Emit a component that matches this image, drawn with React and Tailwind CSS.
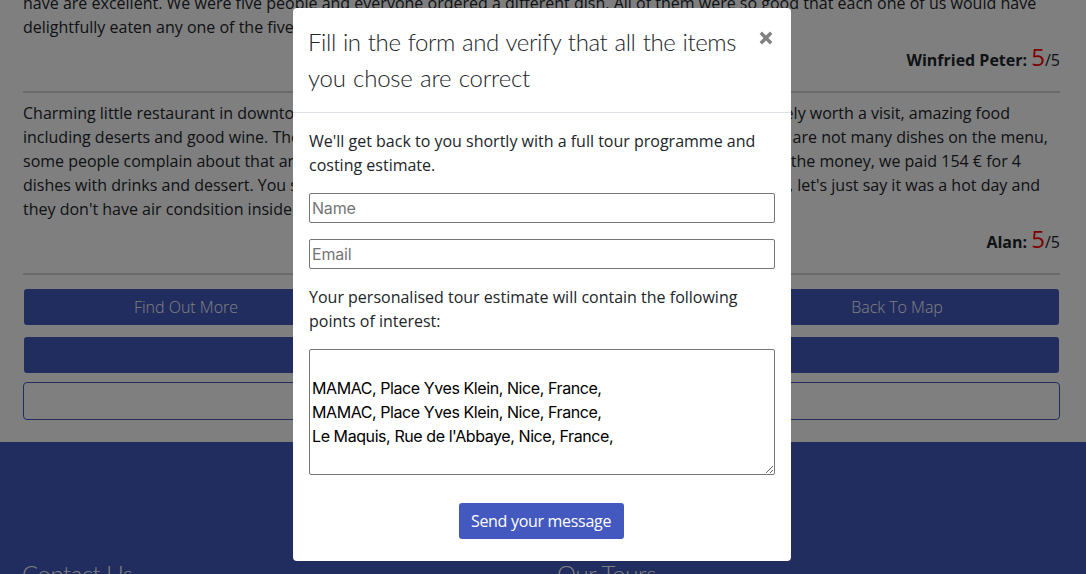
const reviewLines = [
  { start: "Charming little restaurant in downtown", end: "definitely worth a visit, amazing food", pad: "pr-[50px]" },
  { start: "including deserts and good wine. There", end: "are not many dishes on the menu,", pad: "pr-[12px]" },
  { start: "some people complain about that and", end: "the money, we paid 154 € for 4", pad: "pr-[39px]" },
  { start: "dishes with drinks and dessert. You sit", end: ", let's just say it was a hot day and", pad: "pr-[20px]" },
  { start: "they don't have air condsition inside.", end: "", pad: "" },
];

function Score({ author }) {
  return (
    <p className="flex h-9 items-baseline justify-end whitespace-pre leading-9">
      <strong className="font-bold">{author}: </strong>
      <span className="text-2xl leading-9 text-[#ff0000]">5</span>
      <span>/5</span>
    </p>
  );
}

function Page() {
  return (
    <div className="h-full overflow-hidden bg-white">
      <main className="h-[442px] overflow-hidden pl-[23px] pr-[26px]">
        <p className="-mt-[9px] whitespace-nowrap">
          <span className="block tracking-[0.01px]">
            have are excellent. We were five people and everyone ordered a different dish. All of them were so good that each one of us would have
          </span>
          <span className="block">delightfully eaten any one of the five.</span>
        </p>
        <Score author="Winfried Peter" />
        <hr className="mt-4 h-[2px] border-0 bg-[#d4d4d4]" />
        <div className="mt-2 whitespace-nowrap">
          {reviewLines.map((line) => (
            <p key={line.start} className={"flex justify-between " + line.pad}>
              <span>{line.start}</span>
              <span>{line.end}</span>
            </p>
          ))}
        </div>
        <Score author="Alan" />
        <hr className="mt-4 h-[2px] border-0 bg-[#d4d4d4]" />
        <div className="mt-[14px] flex justify-between px-px text-white">
          <button className="h-9 w-[324px] rounded-[3px] bg-[#4258be] font-light">Find Out More</button>
          <button className="h-9 w-[324px] rounded-[3px] bg-[#4258be] font-light">Back To Map</button>
        </div>
        <div className="mx-px mt-3 h-9 rounded-[3px] bg-[#4258be]" />
        <div className="mt-[9px] h-[38px] rounded border border-[#4258be]" />
      </main>
      <footer className="flex h-[132px] overflow-hidden bg-[#4258be] pl-[22px] pt-[116px] font-['Lato',sans-serif] text-2xl font-light text-white">
        <h4 className="w-[535px] tracking-[-0.5px]">Contact Us</h4>
        <h4 className="tracking-[-0.3px]">Our Tours</h4>
      </footer>
    </div>
  );
}

function EstimateDialog() {
  const field = "block w-full border border-[#767676] rounded-[2px] bg-white px-[2px] font-['Inter','Liberation_Sans',sans-serif] outline-none placeholder:text-[#757575]";
  return (
    <section role="dialog" className="h-[553px] w-[498px] overflow-hidden rounded-[4px] bg-white">
      <header className="flex h-[105px] justify-between border-b border-[#dee2e6] pl-[15px] pr-[18px] pt-4">
        <h4 className="whitespace-nowrap font-['Lato',sans-serif] text-2xl font-light leading-9">
          <span className="block tracking-[-0.4px] [word-spacing:1px]">Fill in the form and verify that all the items</span>
          <span className="block tracking-[-0.2px] [word-spacing:1px]">you chose are correct</span>
        </h4>
        <button aria-label="Close" className="mt-[7px] h-[14px] w-[14px]">
          <svg viewBox="0 0 14 14" className="h-[14px] w-[14px]" fill="none" stroke="#808080" strokeWidth="3.4">
            <path d="M1.8 1.8 12.2 12.2M12.2 1.8 1.8 12.2" />
          </svg>
        </button>
      </header>
      <div className="px-4 pt-4">
        <p className="whitespace-nowrap">
          We'll get back to you shortly with a full tour programme and
          <br />
          costing estimate.
        </p>
        <input className={field + " mt-4 h-[30px] tracking-[-0.2px]"} placeholder="Name" />
        <input className={field + " mt-4 h-[30px] tracking-[-0.2px]"} placeholder="Email" />
        <p className="mt-4 whitespace-nowrap">
          Your personalised tour estimate will contain the following
          <br />
          points of interest:
        </p>
        <textarea
          className={field + " mt-4 h-[126px] resize whitespace-pre pt-[2px] tracking-[-0.42px] text-black"}
          defaultValue={"\nMAMAC, Place Yves Klein, Nice, France,\nMAMAC, Place Yves Klein, Nice, France,\nLe Maquis, Rue de l'Abbaye, Nice, France,"}
        />
        <div className="mt-7 flex justify-center pr-[2px]">
          <button className="h-9 w-[165px] rounded-[3px] bg-[#4459c0] tracking-[-0.3px] text-white">Send your message</button>
        </div>
      </div>
    </section>
  );
}

export default function App() {
  return (
    <div className="relative h-[574px] w-[1086px] overflow-hidden font-['Open_Sans',sans-serif] text-base leading-6 text-[#212529]">
      <Page />
      <div className="absolute inset-0 flex items-start justify-center bg-black/50 pr-[2px] pt-2">
        <EstimateDialog />
      </div>
    </div>
  );
}
